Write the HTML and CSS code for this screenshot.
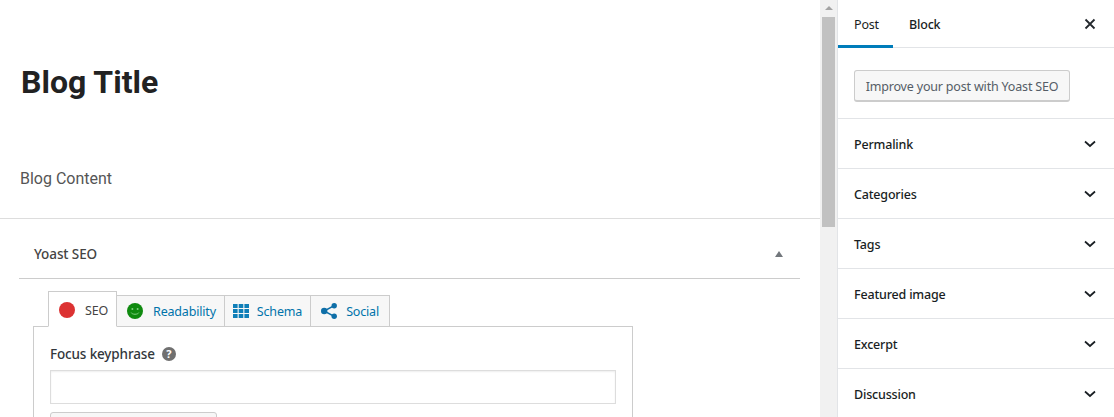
FILE: index.html
```html
<!DOCTYPE html>
<html lang="en">
<head>
    <meta charset="UTF-8">
    <meta name="viewport" content="width=device-width, initial-scale=1.0">
    <title>Edit Post</title>
    <link rel="stylesheet" href="styles.css">
</head>
<body>
    <div class="editor">
        <div class="post-area">
            <h1 class="post-title">Blog Title</h1>
            <p class="post-content">Blog Content</p>
        </div>

        <div class="metabox">
            <div class="metabox-head">
                <span>Yoast SEO</span>
                <span class="metabox-toggle"></span>
            </div>

            <div class="yoast-tabs">
                <div class="yoast-tab active">
                    <span class="dot-red"></span>
                    <span>SEO</span>
                </div>
                <div class="yoast-tab tab-readability">
                    <svg class="tab-icon" viewBox="0 0 16 16">
                        <circle cx="8" cy="8" r="8" fill="#0f8a0f"/>
                        <circle cx="5.4" cy="6" r="1" fill="#7fd07f"/>
                        <circle cx="10.6" cy="6" r="1" fill="#7fd07f"/>
                        <path d="M4.2 9.6c.8 2.2 6.8 2.2 7.6 0" fill="none" stroke="#7fd07f" stroke-width="1"/>
                    </svg>
                    <span>Readability</span>
                </div>
                <div class="yoast-tab tab-schema">
                    <svg class="tab-icon" viewBox="0 0 16 16" fill="#0f7fb8">
                        <rect x="0" y="1" width="4.6" height="4"/>
                        <rect x="5.7" y="1" width="4.6" height="4"/>
                        <rect x="11.4" y="1" width="4.6" height="4"/>
                        <rect x="0" y="6" width="4.6" height="4"/>
                        <rect x="5.7" y="6" width="4.6" height="4"/>
                        <rect x="11.4" y="6" width="4.6" height="4"/>
                        <rect x="0" y="11" width="4.6" height="4"/>
                        <rect x="5.7" y="11" width="4.6" height="4"/>
                        <rect x="11.4" y="11" width="4.6" height="4"/>
                    </svg>
                    <span>Schema</span>
                </div>
                <div class="yoast-tab tab-social">
                    <svg class="tab-icon" viewBox="0 0 16 16" fill="#0f6fa8">
                        <circle cx="3.2" cy="8" r="3.2"/>
                        <circle cx="13.2" cy="2.7" r="2.7"/>
                        <circle cx="13.2" cy="13.3" r="2.7"/>
                        <path d="M3.2 8l10-5.3M3.2 8l10 5.3" stroke="#0f6fa8" stroke-width="1.5" fill="none"/>
                    </svg>
                    <span>Social</span>
                </div>
            </div>

            <div class="yoast-panel">
                <div class="field-label">
                    <span>Focus keyphrase</span>
                    <span class="help-icon">?</span>
                </div>
                <div class="field-input"></div>
                <div class="field-button"></div>
            </div>
        </div>
    </div>

    <div class="scrollbar">
        <div class="scroll-arrow"></div>
        <div class="scroll-thumb"></div>
    </div>

    <div class="sidebar">
        <div class="sidebar-tabs">
            <div class="sidebar-tab active">Post</div>
            <div class="sidebar-tab">Block</div>
            <svg class="close-icon" viewBox="0 0 12 12">
                <path d="M1.5 1.5l9 9M10.5 1.5l-9 9" stroke="#23282d" stroke-width="1.8" fill="none"/>
            </svg>
        </div>
        <div class="sidebar-promo">
            <div class="promo-button">Improve your post with Yoast SEO</div>
        </div>
        <div class="panel-row">
            <span>Permalink</span>
            <svg class="chevron" viewBox="0 0 12 8"><path d="M1 1.5l5 4.5 5-4.5" stroke="#191e23" stroke-width="1.7" fill="none"/></svg>
        </div>
        <div class="panel-row">
            <span>Categories</span>
            <svg class="chevron" viewBox="0 0 12 8"><path d="M1 1.5l5 4.5 5-4.5" stroke="#191e23" stroke-width="1.7" fill="none"/></svg>
        </div>
        <div class="panel-row">
            <span>Tags</span>
            <svg class="chevron" viewBox="0 0 12 8"><path d="M1 1.5l5 4.5 5-4.5" stroke="#191e23" stroke-width="1.7" fill="none"/></svg>
        </div>
        <div class="panel-row">
            <span>Featured image</span>
            <svg class="chevron" viewBox="0 0 12 8"><path d="M1 1.5l5 4.5 5-4.5" stroke="#191e23" stroke-width="1.7" fill="none"/></svg>
        </div>
        <div class="panel-row">
            <span>Excerpt</span>
            <svg class="chevron" viewBox="0 0 12 8"><path d="M1 1.5l5 4.5 5-4.5" stroke="#191e23" stroke-width="1.7" fill="none"/></svg>
        </div>
        <div class="panel-row">
            <span>Discussion</span>
            <svg class="chevron" viewBox="0 0 12 8"><path d="M1 1.5l5 4.5 5-4.5" stroke="#191e23" stroke-width="1.7" fill="none"/></svg>
        </div>
    </div>
</body>
</html>
```

FILE: styles.css
```css
* {
    margin: 0;
    padding: 0;
    box-sizing: border-box;
}

body {
    display: flex;
    height: 100vh;
    overflow: hidden;
    background: #fff;
    font-family: 'Noto Sans', sans-serif;
    font-size: 12.5px;
    letter-spacing: -0.18px;
    color: #191e23;
}

.editor {
    width: 820px;
    flex-shrink: 0;
    overflow: hidden;
}

.post-area {
    height: 219px;
    padding: 62px 0 0 20px;
    border-bottom: 1px solid #ddd;
}

.post-title {
    margin-left: 1px;
    font-family: Roboto, sans-serif;
    font-size: 32px;
    line-height: 40px;
    font-weight: 700;
    letter-spacing: 0;
    color: #222;
}

.post-content {
    margin-top: 65px;
    font-family: Roboto, sans-serif;
    font-size: 16px;
    line-height: 24px;
    letter-spacing: 0;
    color: #555;
}

.metabox {
    padding: 0 20px 0 19px;
}

.metabox-head {
    display: flex;
    justify-content: space-between;
    align-items: center;
    height: 60px;
    padding: 10px 17px 0 15px;
    border-bottom: 1px solid #ccc;
    font-size: 13.5px;
    font-weight: 500;
    letter-spacing: -0.1px;
    color: #444;
}

.metabox-toggle {
    width: 0;
    height: 0;
    border-left: 4px solid transparent;
    border-right: 4px solid transparent;
    border-bottom: 6px solid #72777c;
}

.yoast-tabs {
    display: flex;
    align-items: flex-end;
    margin: 12px 0 -1px 29px;
    position: relative;
}

.yoast-tab {
    display: flex;
    align-items: center;
    gap: 10px;
    height: 32px;
    padding: 0 8px 0 9px;
    margin-left: -1px;
    background: #f7f7f7;
    border: 1px solid #ccc;
    color: #0073aa;
}

.yoast-tab:first-child {
    margin-left: 0;
}

.yoast-tab.active {
    height: 36px;
    padding: 2px 8px 0 10px;
    background: #fff;
    border-bottom-color: #fff;
    color: #444;
    position: relative;
    z-index: 1;
}

.tab-readability {
    padding: 0 8px 0 10px;
    gap: 10px;
}

.tab-schema {
    padding: 0 8px 0 8px;
    gap: 8px;
}

.tab-social {
    padding: 0 10px 0 10px;
    gap: 9px;
}

.dot-red {
    width: 16px;
    height: 16px;
    border-radius: 50%;
    background: #dc3232;
}

.tab-icon {
    width: 16px;
    height: 16px;
    flex-shrink: 0;
}

.yoast-panel {
    width: 600px;
    margin-left: 14px;
    height: 120px;
    padding: 16px 16px 0;
    border: 1px solid #ccc;
}

.field-label {
    display: flex;
    align-items: center;
    gap: 7px;
    height: 22px;
    font-size: 13.5px;
    font-weight: 500;
    letter-spacing: -0.15px;
    color: #32373c;
}

.help-icon {
    width: 14px;
    height: 14px;
    border-radius: 50%;
    background: #707070;
    color: #fff;
    font-size: 11px;
    line-height: 14px;
    font-weight: 700;
    text-align: center;
}

.field-input {
    width: 566px;
    height: 34px;
    margin-top: 5px;
    background: #fff;
    border: 1px solid #ddd;
    box-shadow: inset 0 1px 2px rgba(0, 0, 0, 0.07);
}

.field-button {
    width: 167px;
    height: 28px;
    margin-top: 8px;
    background: #f7f7f7;
    border: 1px solid #ccc;
    border-radius: 3px;
}

.scrollbar {
    width: 17px;
    flex-shrink: 0;
    background: #f1f1f1;
    display: flex;
    flex-direction: column;
    align-items: center;
}

.scroll-arrow {
    width: 0;
    height: 0;
    margin: 6px 0 7px;
    border-left: 4px solid transparent;
    border-right: 4px solid transparent;
    border-bottom: 4px solid #a3a3a3;
}

.scroll-thumb {
    width: 13px;
    height: 210px;
    background: #c1c1c1;
}

.sidebar {
    flex: 1;
    border-left: 1px solid #e2e4e7;
    min-width: 0;
}

.sidebar-tabs {
    display: flex;
    align-items: center;
    height: 48px;
    border-bottom: 1px solid #e2e4e7;
    padding-right: 18px;
}

.sidebar-tab {
    height: 48px;
    line-height: 50px;
    padding: 0 15px 0 16px;
    color: #191e23;
    font-weight: 500;
}

.sidebar-tab.active {
    width: 55px;
    border-bottom: 3px solid #007cba;
    font-weight: 400;
}

.close-icon {
    width: 12px;
    height: 12px;
    margin-left: auto;
}

.sidebar-promo {
    height: 71px;
    padding: 22px 16px 0;
    border-bottom: 1px solid #e2e4e7;
}

.promo-button {
    width: 216px;
    height: 32px;
    line-height: 31px;
    text-align: center;
    white-space: nowrap;
    background: #f7f7f7;
    border: 1px solid #ccc;
    border-bottom-width: 2px;
    border-radius: 3px;
    color: #555d66;
}

.panel-row {
    display: flex;
    justify-content: space-between;
    align-items: center;
    height: 50px;
    padding: 0 18px 0 16px;
    border-bottom: 1px solid #e2e4e7;
    font-weight: 500;
    color: #191e23;
}

.panel-row span {
    padding-top: 2px;
}

.chevron {
    width: 12px;
    height: 8px;
}
```
